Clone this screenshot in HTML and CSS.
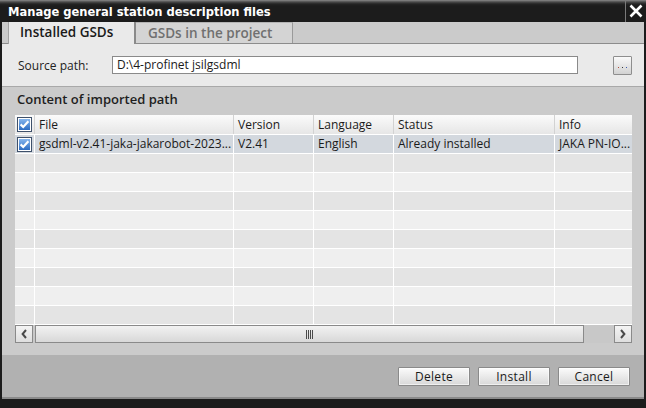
FILE: index.html
```html
<!DOCTYPE html>
<html>
<head>
<meta charset="utf-8">
<title>Manage general station description files</title>
<link rel="stylesheet" href="styles.css">
</head>
<body>
<div class="window">
  <div class="titlebar">
    <span class="title">Manage general station description files</span>
    <div class="close">
      <svg width="14" height="14" viewBox="0 0 14 14"><path d="M1.5 1.5 L12.5 12.5 M12.5 1.5 L1.5 12.5" stroke="#fff" stroke-width="2.6" fill="none"/></svg>
    </div>
  </div>
  <div class="body">
    <div class="tabs">
      <div class="tab active">Installed GSDs</div>
      <div class="tab inactive">GSDs in the project</div>
    </div>
    <div class="source">
      <span class="label">Source path:</span>
      <div class="input">D:\4-profinet jsilgsdml</div>
      <div class="browse">
        <svg width="9" height="3" viewBox="0 0 9 3"><rect x="0" y="1" width="1" height="1" fill="#b04a3a"/><rect x="4" y="1" width="1" height="1" fill="#3a3a3a"/><rect x="8" y="1" width="1" height="1" fill="#3a5ab0"/></svg>
      </div>
    </div>
    <div class="content">
      <div class="section-title">Content of imported path</div>
      <div class="table">
        <div class="row head">
          <div class="cell c-check">
            <svg width="15" height="15" viewBox="0 0 15 15"><defs><linearGradient id="cb1" x1="0" y1="0" x2="0" y2="1"><stop offset="0" stop-color="#86b6ee"/><stop offset="1" stop-color="#2c6cc2"/></linearGradient></defs><rect x="0.5" y="0.5" width="14" height="14" fill="#fff" stroke="#3f516b"/><rect x="2" y="2" width="11" height="11" fill="url(#cb1)"/><path d="M3.6 7.4 L6.2 10 L11.4 4.2" fill="none" stroke="#fff" stroke-width="2.2"/></svg>
          </div>
          <div class="cell c-file">File</div>
          <div class="cell c-ver">Version</div>
          <div class="cell c-lang">Language</div>
          <div class="cell c-status">Status</div>
          <div class="cell c-info">Info</div>
        </div>
        <div class="row sel">
          <div class="cell c-check">
            <svg width="15" height="15" viewBox="0 0 15 15"><defs><linearGradient id="cb2" x1="0" y1="0" x2="0" y2="1"><stop offset="0" stop-color="#86b6ee"/><stop offset="1" stop-color="#2c6cc2"/></linearGradient></defs><rect x="0.5" y="0.5" width="14" height="14" fill="#fff" stroke="#3f516b"/><rect x="2" y="2" width="11" height="11" fill="url(#cb2)"/><path d="M3.6 7.4 L6.2 10 L11.4 4.2" fill="none" stroke="#fff" stroke-width="2.2"/></svg>
          </div>
          <div class="cell c-file">gsdml-v2.41-jaka-jakarobot-2023...</div>
          <div class="cell c-ver">V2.41</div>
          <div class="cell c-lang">English</div>
          <div class="cell c-status">Already installed</div>
          <div class="cell c-info">JAKA PN-IO...</div>
        </div>
        <div class="row alt"><div class="cell c-check"></div><div class="cell c-file"></div><div class="cell c-ver"></div><div class="cell c-lang"></div><div class="cell c-status"></div><div class="cell c-info"></div></div>
        <div class="row"><div class="cell c-check"></div><div class="cell c-file"></div><div class="cell c-ver"></div><div class="cell c-lang"></div><div class="cell c-status"></div><div class="cell c-info"></div></div>
        <div class="row alt"><div class="cell c-check"></div><div class="cell c-file"></div><div class="cell c-ver"></div><div class="cell c-lang"></div><div class="cell c-status"></div><div class="cell c-info"></div></div>
        <div class="row"><div class="cell c-check"></div><div class="cell c-file"></div><div class="cell c-ver"></div><div class="cell c-lang"></div><div class="cell c-status"></div><div class="cell c-info"></div></div>
        <div class="row alt"><div class="cell c-check"></div><div class="cell c-file"></div><div class="cell c-ver"></div><div class="cell c-lang"></div><div class="cell c-status"></div><div class="cell c-info"></div></div>
        <div class="row"><div class="cell c-check"></div><div class="cell c-file"></div><div class="cell c-ver"></div><div class="cell c-lang"></div><div class="cell c-status"></div><div class="cell c-info"></div></div>
        <div class="row alt"><div class="cell c-check"></div><div class="cell c-file"></div><div class="cell c-ver"></div><div class="cell c-lang"></div><div class="cell c-status"></div><div class="cell c-info"></div></div>
        <div class="row"><div class="cell c-check"></div><div class="cell c-file"></div><div class="cell c-ver"></div><div class="cell c-lang"></div><div class="cell c-status"></div><div class="cell c-info"></div></div>
        <div class="row alt"><div class="cell c-check"></div><div class="cell c-file"></div><div class="cell c-ver"></div><div class="cell c-lang"></div><div class="cell c-status"></div><div class="cell c-info"></div></div>
        <div class="hscroll">
          <div class="sbtn">
            <svg width="6" height="10" viewBox="0 0 6 10"><path d="M5 1 L1.6 5 L5 9" fill="none" stroke="#4a4a4a" stroke-width="2"/></svg>
          </div>
          <div class="thumb">
            <svg width="7" height="9" viewBox="0 0 7 9"><path d="M0.5 0 V9 M2.5 0 V9 M4.5 0 V9 M6.5 0 V9" stroke="#4a4a4a" stroke-width="1"/></svg>
          </div>
          <div class="track"></div>
          <div class="sbtn">
            <svg width="6" height="10" viewBox="0 0 6 10"><path d="M1 1 L4.4 5 L1 9" fill="none" stroke="#4a4a4a" stroke-width="2"/></svg>
          </div>
        </div>
      </div>
    </div>
    <div class="footer">
      <div class="btn">Delete</div>
      <div class="btn">Install</div>
      <div class="btn">Cancel</div>
    </div>
  </div>
</div>
</body>
</html>
```

FILE: styles.css
```css
html, body {
  margin: 0;
  padding: 0;
}

body {
  width: 646px;
  height: 408px;
  overflow: hidden;
  background: #1c1c1c;
  font-family: "Open Sans", "Noto Sans", sans-serif;
  font-size: 12px;
  color: #1a1a1a;
}

.window {
  display: flex;
  flex-direction: column;
  height: 408px;
}

/* Title bar */
.titlebar {
  height: 22px;
  display: flex;
  align-items: stretch;
  background: linear-gradient(to bottom, #8a8a8a 0, #4a4a4a 2px, #242424 4px, #1c1c1c 6px, #1c1c1c 100%);
}

.title {
  flex: 1;
  padding: 2px 0 0 8px;
  line-height: 20px;
  color: #fff;
  font-family: "DejaVu Sans Condensed", "DejaVu Sans", sans-serif;
  font-stretch: condensed;
  font-weight: bold;
  font-size: 12.8px;
  white-space: nowrap;
}

.close {
  width: 20px;
  border-left: 1px solid #7a7a7a;
  display: flex;
  align-items: center;
  justify-content: center;
}

/* Body */
.body {
  flex: 1;
  margin: 0 2px 9px;
  display: flex;
  flex-direction: column;
  border-bottom: 2px solid #8a8a8a;
}

/* Tabs */
.tabs {
  height: 21px;
  display: flex;
  padding-left: 6px;
  background: #cbcbcb;
  border-bottom: 1px solid #8c8c8c;
}

.tab {
  box-sizing: border-box;
  height: 21px;
  line-height: 21px;
  font-size: 13.5px;
  font-weight: 600;
  white-space: nowrap;
}

.tab.active {
  width: 128px;
  height: 22px;
  margin-bottom: -1px;
  padding-left: 11px;
  background: #eaeaea;
  border-left: 1px solid #a4a4a4;
  border-right: 2px solid #8a8a8a;
  color: #1a1a1a;
}

.tab.inactive {
  width: 157px;
  padding-left: 12px;
  background: #d4d4d4;
  border-right: 1px solid #9a9a9a;
  border-top: 1px solid #b4b4b4;
  color: #707070;
}

/* Source path */
.source {
  height: 42px;
  display: flex;
  align-items: center;
  padding: 0 12px 0 16px;
  background: #eaeaea;
  border-bottom: 1px solid #a9a9a9;
}

.label {
  width: 94px;
  color: #222;
}

.input {
  box-sizing: border-box;
  width: 466px;
  height: 18px;
  line-height: 16px;
  padding-left: 4px;
  background: #fff;
  border: 1px solid #8a8a8a;
  color: #1a1a1a;
}

.browse {
  box-sizing: border-box;
  margin-left: auto;
  width: 19px;
  height: 19px;
  border: 1px solid #8e8e8e;
  border-radius: 1px;
  background: linear-gradient(to bottom, #fafafa, #d2d2d2);
  display: flex;
  justify-content: center;
  align-items: flex-end;
  padding-bottom: 5px;
}

/* Content */
.content {
  flex: 1;
  padding: 4px 12px 12px 13px;
  background: #cbcbcb;
  display: flex;
  flex-direction: column;
}

.section-title {
  height: 16px;
  line-height: 16px;
  margin-bottom: 8px;
  padding-left: 2px;
  font-size: 13px;
  font-weight: 600;
  color: #1e1e1e;
}

.table {
  display: flex;
  flex-direction: column;
}

.row {
  display: flex;
  height: 18px;
  border-bottom: 1px solid #fff;
  background: #efefef;
}

.row.alt {
  background: #e4e4e4;
}

.row.head {
  height: 19px;
  background: linear-gradient(to bottom, #fbfbfb, #e6e6e6);
}

.row.sel {
  background: #d3d8de;
}

.cell {
  box-sizing: border-box;
  height: 100%;
  padding-left: 4px;
  line-height: 18px;
  border-right: 1px solid #fff;
  white-space: nowrap;
  overflow: hidden;
}

.row.head .cell {
  line-height: 19px;
  border-right-color: #d2d2d2;
}

.c-check {
  width: 20px;
  padding-left: 2px;
  display: flex;
  align-items: center;
}

.c-file { width: 199px; }
.c-ver { width: 80px; }
.c-lang { width: 80px; }
.c-status { width: 161px; }
.c-info { width: 77px; border-right: 0; }

/* Horizontal scrollbar */
.hscroll {
  height: 18px;
  display: flex;
  background: #c8c8c8;
}

.sbtn {
  box-sizing: border-box;
  width: 18px;
  height: 18px;
  border: 1px solid #8a8a8a;
  background: linear-gradient(to bottom, #f4f4f4, #dedede);
  display: flex;
  align-items: center;
  justify-content: center;
}

.thumb {
  box-sizing: border-box;
  width: 549px;
  height: 18px;
  margin-left: 2px;
  border: 1px solid #8a8a8a;
  background: linear-gradient(to bottom, #f2f2f2, #d8d8d8);
  display: flex;
  align-items: center;
  justify-content: center;
}

.track {
  flex: 1;
}

/* Footer */
.footer {
  height: 42px;
  display: flex;
  justify-content: flex-end;
  align-items: center;
  gap: 8px;
  padding-right: 14px;
  background: #b1b1b1;
}

.btn {
  box-sizing: border-box;
  width: 72px;
  height: 19px;
  line-height: 17px;
  text-align: center;
  border: 1px solid #8a8a8a;
  border-radius: 1px;
  background: linear-gradient(to bottom, #fbfbfb, #d8d8d8);
  box-shadow: inset 0 0 0 1px rgba(255, 255, 255, 0.6);
  color: #1a1a1a;
  letter-spacing: 0.3px;
}
```
